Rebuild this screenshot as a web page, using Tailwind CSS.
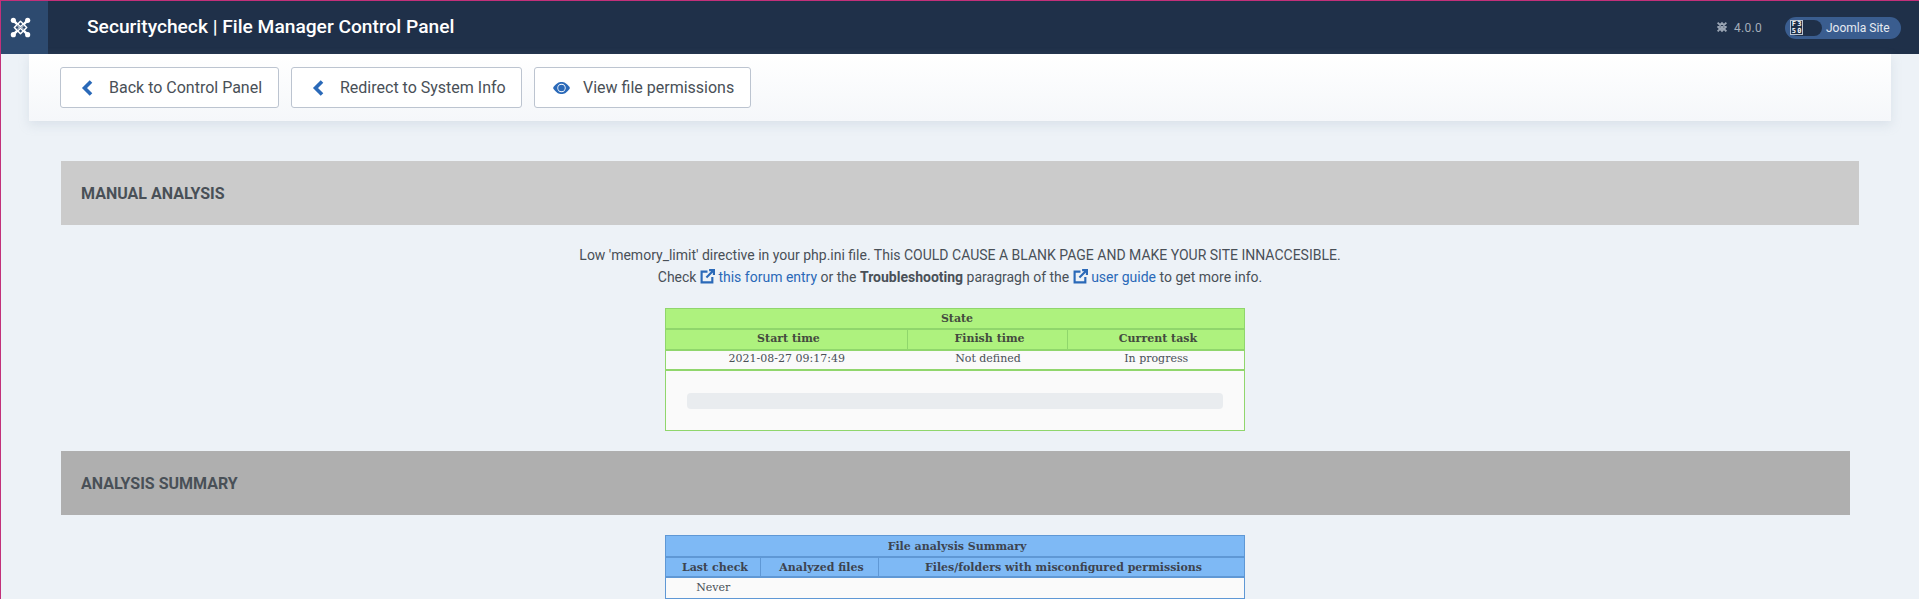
<!DOCTYPE html>
<html lang="en">
<head>
  <meta charset="UTF-8">
  <title>Securitycheck | File Manager Control Panel</title>
  <script src="https://cdn.jsdelivr.net/npm/@tailwindcss/browser@4"></script>
</head>
<body class="h-[599px] overflow-hidden bg-[#edf2f7] border-t border-l border-[#c2307a] font-['Roboto',sans-serif] text-[14px] text-[#495057]">
  <header class="flex items-center h-[53px] bg-[#1f3049] text-white">
    <div class="flex items-center justify-center w-[47px] h-full pr-[8px] bg-[#2d4a6f]">
      <svg width="21" height="21" viewBox="0 0 22 22" fill="none" stroke-linecap="round">
        <path d="M3.5 3.5 L18.5 18.5 M18.5 3.5 L3.5 18.5" stroke="#fff" stroke-width="2.6"/>
        <path d="M11 4.5 L17.5 11 L11 17.5 L4.5 11 Z" stroke="#fff" stroke-width="1.6" stroke-linejoin="round"/>
        <path d="M8 8.6 L10 10.6 M14 8.6 L12 10.6 M8 13.4 L10 11.4 M14 13.4 L12 11.4" stroke="#2d4a6f" stroke-width="0.9"/>
        <circle cx="3.5" cy="3.5" r="2.7" fill="#fff"/><circle cx="18.5" cy="3.5" r="2.7" fill="#fff"/>
        <circle cx="3.5" cy="18.5" r="2.7" fill="#fff"/><circle cx="18.5" cy="18.5" r="2.7" fill="#fff"/>
      </svg>
    </div>
    <h1 class="ml-[39px] text-[19.2px] font-medium">Securitycheck | File Manager Control Panel</h1>
    <div class="ml-auto flex items-center text-[12px]">
      <svg class="mb-px" width="12" height="12" viewBox="0 0 22 22" fill="none" stroke="#9aa5b4" stroke-width="3.4"><path d="M3 3 L19 19 M19 3 L3 19 M11 4 L18 11 L11 18 L4 11 Z"/></svg>
      <span class="ml-[6px] text-[#a5aeba] tracking-[0.3px]">4.0.0</span>
      <div class="flex items-center ml-[23px] mr-[18px] w-[116px] h-[22px] rounded-full bg-[#3a5d8f]">
        <div class="flex items-center w-[32px] h-[16px] ml-[5px] rounded-full bg-[#1f3049]">
          <div class="grid grid-cols-2 shrink-0 w-[13px] h-[15px] bg-[#1f3049] text-white font-['DejaVu_Sans_Mono',monospace] text-[7px] leading-[6.5px] font-bold border border-[#b9c3d0] text-center">
            <span>F</span><span>3</span><span>5</span><span>0</span>
          </div>
        </div>
        <span class="ml-[4px] text-[#e6ebf2]">Joomla Site</span>
      </div>
    </div>
  </header>

  <div class="flex gap-[12px] ml-[28px] w-[1862px] h-[67px] pt-[13px] pl-[31px] bg-gradient-to-b from-white to-[#f5f7fa] shadow-[0_4px_10px_rgba(160,175,195,0.25)] text-[16px]">
    <a class="flex items-center h-[41px] w-[219px] pl-[20px] bg-white border border-[#bcc4d0] rounded-[3px]">
      <svg width="12" height="16" viewBox="0 0 12 16" fill="none" stroke="#2a69b8" stroke-width="3.6"><path d="M10 1.5 L3.5 8 L10 14.5"/></svg>
      <span class="ml-[16px]">Back to Control Panel</span>
    </a>
    <a class="flex items-center h-[41px] w-[231px] pl-[20px] bg-white border border-[#bcc4d0] rounded-[3px]">
      <svg width="12" height="16" viewBox="0 0 12 16" fill="none" stroke="#2a69b8" stroke-width="3.6"><path d="M10 1.5 L3.5 8 L10 14.5"/></svg>
      <span class="ml-[16px]">Redirect to System Info</span>
    </a>
    <a class="flex items-center h-[41px] w-[217px] pl-[18px] bg-white border border-[#bcc4d0] rounded-[3px]">
      <svg width="17" height="12" viewBox="0 0 17 12"><path d="M0 6 C3 1 6 0 8.5 0 C11 0 14 1 17 6 C14 11 11 12 8.5 12 C6 12 3 11 0 6 Z" fill="#2a69b8"/><circle cx="8.5" cy="6" r="4.2" fill="#fff"/><circle cx="8.5" cy="6" r="3.3" fill="#2a69b8"/></svg>
      <span class="ml-[13px]">View file permissions</span>
    </a>
  </div>

  <main class="pt-[40px] pl-[60px]">
    <h2 class="flex items-center h-[64px] w-[1798px] pl-[20px] pt-[2px] bg-[#cbcbcb] text-[16px] font-bold">MANUAL ANALYSIS</h2>

    <div class="w-[1798px] mt-[19px] text-center leading-[22px]">
      <p>Low 'memory_limit' directive in your php.ini file. This COULD CAUSE A BLANK PAGE AND MAKE YOUR SITE INNACCESIBLE.</p>
      <p>Check
        <svg class="inline align-[-2px]" width="15" height="15" viewBox="0 0 14 14" fill="none" stroke="#2a69b8" stroke-width="2"><path d="M7 2.5 H1.5 V12.5 H11.5 V7.5 M6 8 L12.5 1.5 M8.5 1 H13 V5.5"/></svg>
        <span class="text-[#2a69b8]">this forum entry</span> or the <b>Troubleshooting</b> paragragh of the
        <svg class="inline align-[-2px]" width="15" height="15" viewBox="0 0 14 14" fill="none" stroke="#2a69b8" stroke-width="2"><path d="M7 2.5 H1.5 V12.5 H11.5 V7.5 M6 8 L12.5 1.5 M8.5 1 H13 V5.5"/></svg>
        <span class="text-[#2a69b8]">user guide</span> to get more info.</p>
    </div>

    <table class="mt-[20px] ml-[604px] w-[580px] table-fixed border-collapse bg-[#fafafa] font-['DejaVu_Serif',serif] text-[11px] text-center">
      <colgroup><col class="w-[242px]"><col class="w-[160px]"><col></colgroup>
      <thead class="bg-[#aef27e] text-[#444b3e]">
        <tr class="h-[20px]"><th colspan="3" class="border border-b-2 border-[#90d66c] font-bold pl-[4px] pt-[2px]">State</th></tr>
        <tr class="h-[21px]">
          <th class="border-l border-r border-b-2 border-[#90d66c] font-bold pl-[4px]">Start time</th>
          <th class="border-r border-b-2 border-[#90d66c] font-bold pl-[4px]">Finish time</th>
          <th class="border-r border-b-2 border-[#90d66c] font-bold pl-[4px]">Current task</th>
        </tr>
      </thead>
      <tbody>
        <tr class="h-[20px]">
          <td class="border-l border-b-2 border-[#90d66c]">2021-08-27 09:17:49</td>
          <td class="border-b-2 border-[#90d66c] pl-px">Not defined</td>
          <td class="border-r border-b-2 border-[#90d66c] pl-px">In progress</td>
        </tr>
        <tr class="h-[61px]">
          <td colspan="3" class="border border-[#90d66c] px-[21px] pt-[1px]"><div class="h-[16px] rounded-[4px] bg-[#e9ecef]"></div></td>
        </tr>
      </tbody>
    </table>

    <h2 class="flex items-center h-[64px] w-[1789px] mt-[20px] pl-[20px] pt-[2px] bg-[#afafaf] text-[16px] font-bold">ANALYSIS SUMMARY</h2>

    <table class="mt-[20px] ml-[604px] w-[580px] table-fixed border-collapse bg-[#fafafa] font-['DejaVu_Serif',serif] text-[11px] text-center">
      <colgroup><col class="w-[95px]"><col class="w-[118px]"><col></colgroup>
      <thead class="bg-[#7eb9f5] text-[#3d4450]">
        <tr class="h-[21px]"><th colspan="3" class="border border-b-2 border-[#5f98d5] font-bold pl-[4px] pt-[2px]">File analysis Summary</th></tr>
        <tr class="h-[20px]">
          <th class="border-l border-r border-b-2 border-[#5f98d5] font-bold pl-[4px] pt-[2px]">Last check</th>
          <th class="border-r border-b-2 border-[#5f98d5] font-bold pl-[4px] pt-[2px]">Analyzed files</th>
          <th class="border-r border-b-2 border-[#5f98d5] font-bold pl-[4px] pt-[2px]">Files/folders with misconfigured permissions</th>
        </tr>
      </thead>
      <tbody>
        <tr class="h-[21px]">
          <td class="border-l border-b border-[#5f98d5]">Never</td>
          <td class="border-b border-[#5f98d5]"></td>
          <td class="border-r border-b border-[#5f98d5]"></td>
        </tr>
      </tbody>
    </table>
  </main>
</body>
</html>
